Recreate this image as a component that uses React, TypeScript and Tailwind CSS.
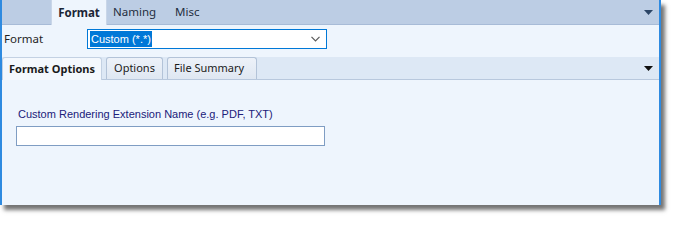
import React from 'react';

const font = { fontFamily: '"Noto Sans", "Open Sans", sans-serif' };
const arial = { fontFamily: '"Liberation Sans", Arial, sans-serif' };

const Caret: React.FC<{ color: string }> = ({ color }) => (
  <svg width="9" height="5" viewBox="0 0 9 5">
    <path d="M0 0 H9 L4.5 5 Z" fill={color} />
  </svg>
);

const App: React.FC = () => {
  return (
    <div className="w-[677px] h-[220px] bg-white" style={font}>
      <div className="w-[661px] h-[205px] flex flex-col bg-[#eef5fd] border-l-2 border-r-2 border-[#2e8ae0] shadow-[4px_5px_4px_rgba(0,0,0,0.55)]">
        {/* Top tab strip */}
        <div className="h-[25px] shrink-0 bg-[#bccde4] border-b border-[#a7bbd7] flex items-end pl-[49px] pr-[4px] text-[11.5px] text-[#1f2d40]">
          <div className="w-[56px] h-[25px] -mb-px bg-[#eef5fd] border-x border-[#c9d6e8] flex items-center justify-center font-bold text-[#1b2536]">
            Format
          </div>
          <div className="ml-[6px] h-[24px] flex items-center">Naming</div>
          <div className="ml-[19px] h-[24px] flex items-center">Misc</div>
          <div className="flex-1" />
          <div className="h-[24px] flex items-center pr-[2px]">
            <Caret color="#2b4566" />
          </div>
        </div>

        {/* Format row */}
        <div className="h-[32px] shrink-0 flex items-start pt-[4px] pl-[2px]">
          <div className="w-[83px] h-[20px] flex items-center text-[11.5px] text-[#1f1f1f]">Format</div>
          <div className="w-[240px] h-[20px] bg-white border border-[#0078d7] flex items-center pl-[2px] pr-[6px]">
            <span className="bg-[#0078d7] text-white text-[11px] leading-[16px] px-[1px]" style={arial}>
              Custom (*.*)
            </span>
            <div className="flex-1" />
            <svg width="9" height="6" viewBox="0 0 9 6">
              <path d="M0.5 0.8 L4.5 4.8 L8.5 0.8" fill="none" stroke="#5a5a5a" strokeWidth="1.2" />
            </svg>
          </div>
        </div>

        {/* Second tab strip */}
        <div className="h-[23px] shrink-0 bg-[#dde8f5] border-b border-[#b8c8dd] flex items-end pr-[4px] text-[11px] text-[#1b1b1b]">
          <div className="w-[100px] h-[23px] -mb-px bg-[#f4f8fd] border border-b-0 border-[#c3d1e3] rounded-t-[3px] flex items-center justify-center font-bold">
            Format Options
          </div>
          <div className="ml-[4px] w-[57px] h-[22px] bg-gradient-to-b from-[#edf2f9] to-[#dfe7f2] border border-b-0 border-[#b3c3d8] rounded-t-[3px] flex items-center justify-center">
            Options
          </div>
          <div className="ml-[4px] w-[90px] h-[22px] bg-gradient-to-b from-[#edf2f9] to-[#dfe7f2] border border-b-0 border-[#b3c3d8] rounded-t-[3px] flex items-center pl-[6px]">
            File Summary
          </div>
          <div className="flex-1" />
          <div className="h-[22px] flex items-center pr-[2px]">
            <Caret color="#101010" />
          </div>
        </div>

        {/* Content */}
        <div className="flex-1 pl-[14px] pt-[27px]">
          <div className="text-[11px] leading-[14px] text-[#20207a] pl-[2px]" style={arial}>
            Custom Rendering Extension Name (e.g. PDF, TXT)
          </div>
          <div className="mt-[5px] w-[309px] h-[20px] bg-white border border-[#7f9dc3]" />
        </div>
      </div>
    </div>
  );
};

export default App;
